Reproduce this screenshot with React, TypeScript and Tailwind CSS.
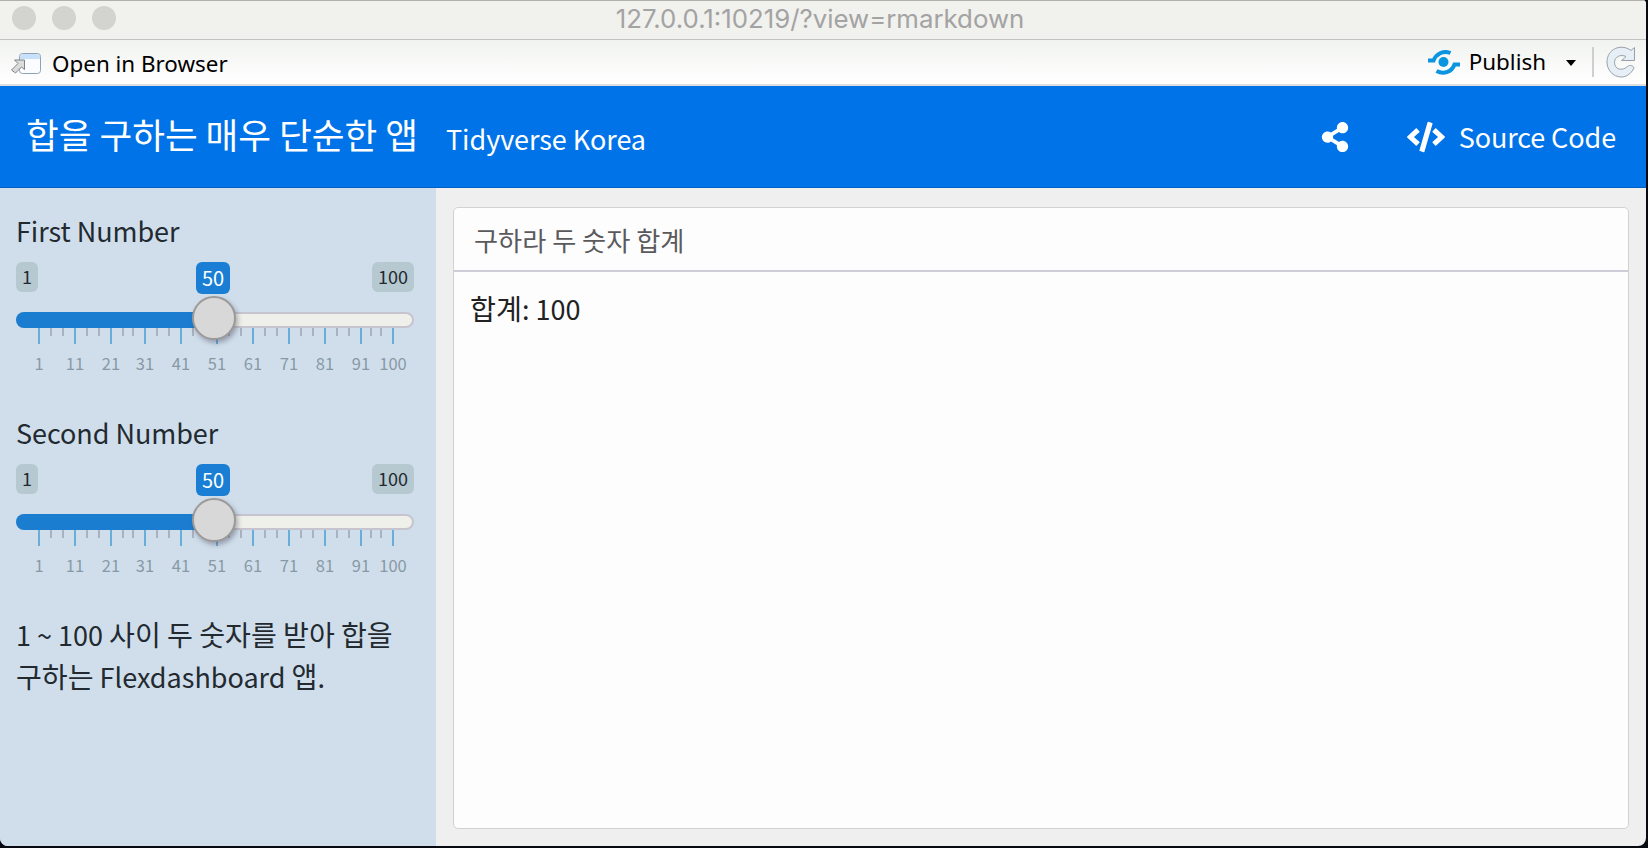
import { FaCode, FaShareAlt } from "react-icons/fa";

const MAJOR = [
  { x: 39, label: "1" },
  { x: 75, label: "11" },
  { x: 111, label: "21" },
  { x: 145, label: "31" },
  { x: 181, label: "41" },
  { x: 217, label: "51" },
  { x: 253, label: "61" },
  { x: 289, label: "71" },
  { x: 325, label: "81" },
  { x: 361, label: "91" },
  { x: 393, label: "100" },
];
const MINOR = [51, 63, 87, 99, 123, 133, 157, 169, 193, 205, 229, 241, 265, 277, 301, 313, 337, 349, 371, 381];

function Slider({ title }: { title: string }) {
  return (
    <div className="h-[202px]">
      <div className="h-[60px] pt-[9px] text-[27px] leading-[40px] tracking-[-0.05px]">{title}</div>
      <div className="relative flex h-8 items-start justify-between">
        <span className="flex h-[30px] w-[22px] items-center justify-center rounded-[6px] bg-[#b6c8d0] pb-px text-[18px]">1</span>
        <span className="absolute left-[180px] top-0 flex h-8 w-[34px] items-center justify-center rounded-[6px] bg-[#1a7fd4] text-[20px] text-white">50</span>
        <span className="flex h-[30px] w-[42px] items-center justify-center rounded-[6px] bg-[#b6c8d0] pb-px text-[18px]">100</span>
      </div>
      <div className="relative mt-[18px] h-4 rounded-full border-2 border-[#c6c4ce] bg-[#f0f0ea]">
        <div className="absolute -left-0.5 -top-0.5 h-4 w-[198px] rounded-l-full bg-[#1a7dd0]" />
      </div>
      <div className="relative h-[60px]">
        {MINOR.map((x) => (
          <span key={x} className="absolute top-0 h-2 w-0.5 bg-[#a9b2c2]" style={{ left: x - 17 }} />
        ))}
        {MAJOR.map(({ x, label }) => (
          <span key={x} className="absolute top-0 h-4 w-0.5 bg-[#69addb]" style={{ left: x - 17 }}>
            <span className="absolute left-1/2 top-[25px] -translate-x-1/2 text-[16.5px] leading-[20px] text-[#8899a6]">{label}</span>
          </span>
        ))}
        <span className="absolute -top-8 left-[176px] size-11 rounded-full border-2 border-[#9c9a98] bg-[#d9d8d8] shadow-[2px_3px_5px_rgba(60,60,80,0.4)]" />
      </div>
    </div>
  );
}

export default function App() {
  return (
    <div className="h-[848px] w-[1648px] overflow-hidden bg-[#080a12] pr-0.5 font-['Noto_Sans_CJK_KR',sans-serif] text-[#222a30]">
      <div className="flex h-[846px] flex-col overflow-hidden rounded-b-[8px] rounded-tr-[4px] bg-[#efefef]">
        <header className="relative flex h-10 shrink-0 items-center justify-center border-b border-t border-b-[#c2c2c2] border-t-[#b3afac] bg-[#f1f1ee] pb-0.5 pr-1.5">
          <div className="absolute left-3 top-[5px] flex gap-4">
            <span className="size-6 rounded-full bg-[#d3d3cf]" />
            <span className="size-6 rounded-full bg-[#d3d3cf]" />
            <span className="size-6 rounded-full bg-[#d3d3cf]" />
          </div>
          <span className="font-['Inter',sans-serif] text-[25.8px] text-[#a3a3a3]">127.0.0.1:10219/?view=rmarkdown</span>
        </header>

        <div className="flex h-[46px] shrink-0 items-center border-b-2 border-[#dedede] bg-linear-to-b from-[#f1f3f0] to-white pl-[11px] font-['Noto_Sans',sans-serif] text-[22.4px] text-black">
          <svg width="30" height="24" viewBox="0 0 30 24" className="mt-1 shrink-0">
            <rect x="8.5" y="1.5" width="21" height="20" rx="3" fill="#fafcff" stroke="#8ea4b4" />
            <path d="M9 7V4.500a3 3 0 0 1 3-2.500h14a3 3 0 0 1 3 2.500V7Z" fill="#c9e0fa" />
            <path d="M3.500 8H13.500v9.500l-3-2.500-6 6-4-3L7 11.500Z" fill="#dcdcda" stroke="#7e8488" />
          </svg>
          <span className="ml-[11px] pt-1">Open in Browser</span>
          <svg width="32" height="25" viewBox="0 0 32 25" className="ml-auto">
            <circle cx="15.500" cy="12" r="5" fill="#0b95e0" />
            <path d="M0 10.500h5.500C8 4 15 0 22.500 3M32 14.500h-5.500C24 21.500 16 25 8.500 21" fill="none" stroke="#0b95e0" strokeWidth="4" />
          </svg>
          <span className="-mt-px ml-[9px]">Publish</span>
          <svg width="10" height="6" viewBox="0 0 10 6" className="ml-[20px] mt-0.5"><path d="M0 0h10L5 6Z" fill="#000" /></svg>
          <span className="ml-[16px] h-[30px] w-0.5 bg-[#cfcfcf]" />
          <svg width="30" height="32" viewBox="0 0 30 32" className="ml-[12px] mr-[10px]">
            <path d="M28.500 1.500V14.500H15.500L20 10.500C15 8 8.500 10.500 8.500 16.500C8.500 23.500 16 25.500 21.500 20.500C23.500 18.500 27.500 19.500 28 22C25 28 20 31 15.500 31C7 31 1 24 1 16C1 3 15 -3 25 4.500Z" fill="#e6eef6" stroke="#98a1a9" />
          </svg>
        </div>

        <nav className="flex h-[102px] shrink-0 items-center border-b border-[#0060c4] bg-[#0073e8] pl-[26px] pr-[30px] text-white">
          <span className="-mt-1.5 text-[35.6px]">합을 구하는 매우 단순한 앱</span>
          <span className="ml-[28px] pt-1.5 text-[27px] tracking-[-0.05px]">Tidyverse Korea</span>
          <FaShareAlt className="ml-auto size-[30px]" />
          <FaCode className="ml-[57px] size-[38px]" />
          <span className="ml-[14px] pt-0.5 text-[27px] tracking-[-0.1px]">Source Code</span>
        </nav>

        <div className="flex min-h-0 flex-1">
          <aside className="w-[436px] shrink-0 bg-[#d0deeb] px-4 pt-[14px]">
            <div className="w-[398px]">
              <Slider title="First Number" />
              <Slider title="Second Number" />
              <div className="pt-[7px] text-[27px] leading-[42px] whitespace-nowrap">
                <p className="h-[42px]">
                  1 ~ 100 <span className="text-[28.1px]">사이 두 숫자를 받아 합을</span>
                </p>
                <p className="h-[42px]">
                  <span className="text-[28.1px]">구하는</span> Flexdashboard <span className="text-[28.1px]">앱</span>.
                </p>
              </div>
            </div>
          </aside>
          <main className="flex-1 pb-[17px] pl-[17px] pr-[17px] pt-[19px]">
            <section className="h-full rounded-[5px] border border-[#d2d2d4] bg-[#fdfdfe]">
              <h2 className="flex h-[64px] items-center border-b-2 border-[#cdcdd8] pl-5 pt-1 text-[26.2px] text-[#5a5a5c]">구하라 두 숫자 합계</h2>
              <p className="px-4 pt-[16px] text-[27px] leading-[40px] text-[#222]"><span className="text-[28.2px]">합계</span>: 100</p>
            </section>
          </main>
        </div>
      </div>
    </div>
  );
}
